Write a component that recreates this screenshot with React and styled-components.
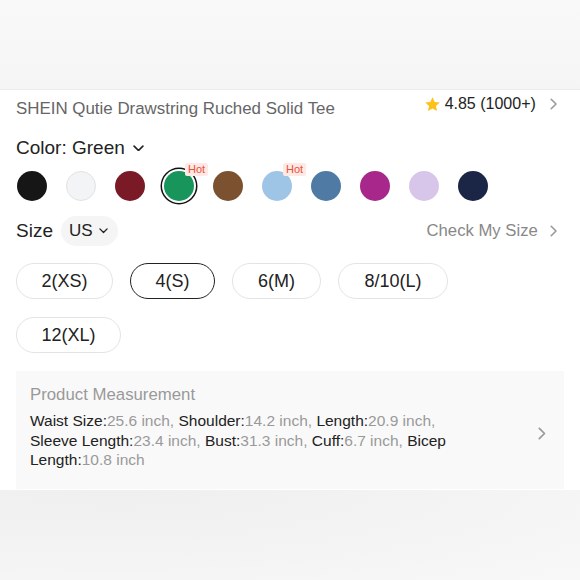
import React from 'react';
import styled, { createGlobalStyle } from 'styled-components';

const Global = createGlobalStyle`
  html, body { margin: 0; padding: 0; background: #f6f6f6; }
  body { font-family: "Liberation Sans", Arial, sans-serif; }
`;

const Page = styled.div`
  width: 580px;
  height: 580px;
  display: flex;
  flex-direction: column;
  overflow: hidden;
`;

const TopShade = styled.div`
  height: 89px;
  background: linear-gradient(180deg, #f9f9f9 0%, #f5f5f5 100%);
  border-bottom: 1px solid #ececec;
`;

const Sheet = styled.div`
  background: #fff;
  height: 400px;
  display: flex;
  flex-direction: column;
`;

const Content = styled.div`
  padding: 0 16px;
  display: flex;
  flex-direction: column;
`;

const TitleRow = styled.div`
  height: 36px;
  display: flex;
  align-items: center;
  justify-content: space-between;
  padding-right: 7px;
`;

const Title = styled.div`
  font-size: 16.9px;
  color: #666;
  margin-top: 2px;
`;

const Rating = styled.div`
  display: flex;
  align-items: center;
  gap: 4px;
  font-size: 16px;
  color: #222;
  margin-top: -8px;
`;

const Chevron = styled.span`
  display: inline-flex;
  color: ${p => p.$color || '#999'};
  margin-left: ${p => p.$gap || 12}px;
`;

const Heading = styled.div`
  display: flex;
  align-items: center;
  font-size: 19px;
  color: #222;
  height: 36px;
  margin-top: ${p => p.$top || 0}px;
  gap: 8px;
`;

const Swatches = styled.div`
  display: flex;
  gap: 19px;
  padding-left: 1px;
  height: 40px;
  align-items: center;
`;

const Swatch = styled.div`
  position: relative;
  width: 30px;
  height: 30px;
  border-radius: 50%;
  background: ${p => p.$color};
  box-sizing: border-box;
  border: ${p => (p.$light ? '1px solid #e2e2e2' : 'none')};
  box-shadow: ${p => (p.$active ? '0 0 0 2px #fff, 0 0 0 3.5px #111' : 'none')};
`;

const Hot = styled.span`
  position: absolute;
  top: -8px;
  left: 21px;
  background: #ffe9e5;
  color: #e8503a;
  font-size: 11px;
  line-height: 13px;
  padding: 0 3px;
  border-radius: 2px;
`;

const SizeRow = styled.div`
  display: flex;
  align-items: center;
  justify-content: space-between;
  height: 34px;
  margin-top: 8px;
  padding-right: 7px;
`;

const SizeLeft = styled.div`
  display: flex;
  align-items: center;
  gap: 8px;
  font-size: 19px;
  color: #222;
`;

const UnitPill = styled.div`
  display: flex;
  align-items: center;
  gap: 6px;
  background: #f5f5f5;
  border-radius: 15px;
  height: 30px;
  padding: 0 10px 0 8px;
  font-size: 17px;
  color: #222;
`;

const CheckSize = styled.div`
  display: flex;
  align-items: center;
  font-size: 16.7px;
  color: #888;
`;

const SizeGrid = styled.div`
  display: flex;
  flex-wrap: wrap;
  gap: 18px 17px;
  margin-top: 15px;
`;

const SizeBtn = styled.div`
  height: 36px;
  box-sizing: border-box;
  width: ${p => p.$w}px;
  border-radius: 18px;
  border: ${p => (p.$active ? '1.5px solid #222' : '1px solid #e4e4e4')};
  display: flex;
  align-items: center;
  justify-content: center;
  font-size: 18px;
  color: #222;
`;

const Measure = styled.div`
  margin-top: 18px;
  background: #f9f9f9;
  padding: 14px 18px 0 14px;
  display: flex;
  align-items: center;
  height: 118px;
  box-sizing: border-box;
`;

const MeasureBody = styled.div`
  width: 445px;
  align-self: flex-start;
`;

const MeasureTitle = styled.div`
  font-size: 16.8px;
  line-height: 20px;
  color: #999;
  margin-bottom: 6px;
`;

const MeasureText = styled.div`
  font-size: 15.5px;
  line-height: 19.5px;
  color: #999;
  b { font-weight: normal; color: #222; }
`;

const Push = styled.div`
  flex: 1;
  display: flex;
  justify-content: flex-end;
  margin-top: -8px;
`;

const BottomShade = styled.div`
  flex: 1;
  background: radial-gradient(ellipse at 20% 0%, #efefef 0%, #f4f4f4 60%, #f8f8f8 100%);
`;

const ChevronIcon = ({ size = 12 }) => (
  <svg width={size * 0.6} height={size} viewBox="0 0 6 10" fill="none">
    <path d="M1 1l4 4-4 4" stroke="currentColor" strokeWidth="1.3" strokeLinecap="round" strokeLinejoin="round" />
  </svg>
);

const DownIcon = ({ w = 11 }) => (
  <svg width={w} height={w * 0.6} viewBox="0 0 10 6" fill="none">
    <path d="M1 1l4 4 4-4" stroke="currentColor" strokeWidth="1.5" strokeLinecap="round" strokeLinejoin="round" />
  </svg>
);

const Star = () => (
  <svg width="17" height="17" viewBox="0 0 24 24">
    <path d="M12 1.8l3.1 6.6 7.1.8-5.3 4.9 1.5 7.1L12 17.6l-6.4 3.6 1.5-7.1L1.8 9.2l7.1-.8z" fill="#fdc11c" />
  </svg>
);

const colors = [
  { c: '#161616' },
  { c: '#f3f4f6', light: true },
  { c: '#7a1a26' },
  { c: '#17955a', active: true, hot: true },
  { c: '#7c512f' },
  { c: '#9fc5e6', hot: true },
  { c: '#4f7aa4' },
  { c: '#a8278b' },
  { c: '#d7c6e9' },
  { c: '#1b2546' },
];

const sizes = [
  { t: '2(XS)', w: 97 },
  { t: '4(S)', w: 85, active: true },
  { t: '6(M)', w: 89 },
  { t: '8/10(L)', w: 110 },
  { t: '12(XL)', w: 105 },
];

export default function App() {
  return (
    <Page>
      <Global />
      <TopShade />
      <Sheet>
        <Content>
          <TitleRow>
            <Title>SHEIN Qutie Drawstring Ruched Solid Tee</Title>
            <Rating>
              <Star />
              <span>4.85 (1000+)</span>
              <Chevron $gap={10}><ChevronIcon /></Chevron>
            </Rating>
          </TitleRow>
          <Heading $top={4}>
            Color: Green <DownIcon />
          </Heading>
          <Swatches>
            {colors.map((s, i) => (
              <Swatch key={i} $color={s.c} $light={s.light} $active={s.active}>
                {s.hot && <Hot>Hot</Hot>}
              </Swatch>
            ))}
          </Swatches>
          <SizeRow>
            <SizeLeft>
              Size
              <UnitPill>US <DownIcon w={9} /></UnitPill>
            </SizeLeft>
            <CheckSize>
              Check My Size
              <Chevron $gap={12}><ChevronIcon /></Chevron>
            </CheckSize>
          </SizeRow>
          <SizeGrid>
            {sizes.map(s => (
              <SizeBtn key={s.t} $w={s.w} $active={s.active}>{s.t}</SizeBtn>
            ))}
          </SizeGrid>
          <Measure>
            <MeasureBody>
              <MeasureTitle>Product Measurement</MeasureTitle>
              <MeasureText>
                <b>Waist Size:</b>25.6 inch, <b>Shoulder:</b>14.2 inch, <b>Length:</b>20.9 inch, <b>Sleeve Length:</b>23.4 inch, <b>Bust:</b>31.3 inch, <b>Cuff:</b>6.7 inch, <b>Bicep Length:</b>10.8 inch
              </MeasureText>
            </MeasureBody>
            <Push><Chevron $gap={0}><ChevronIcon size={13} /></Chevron></Push>
          </Measure>
        </Content>
      </Sheet>
      <BottomShade />
    </Page>
  );
}
